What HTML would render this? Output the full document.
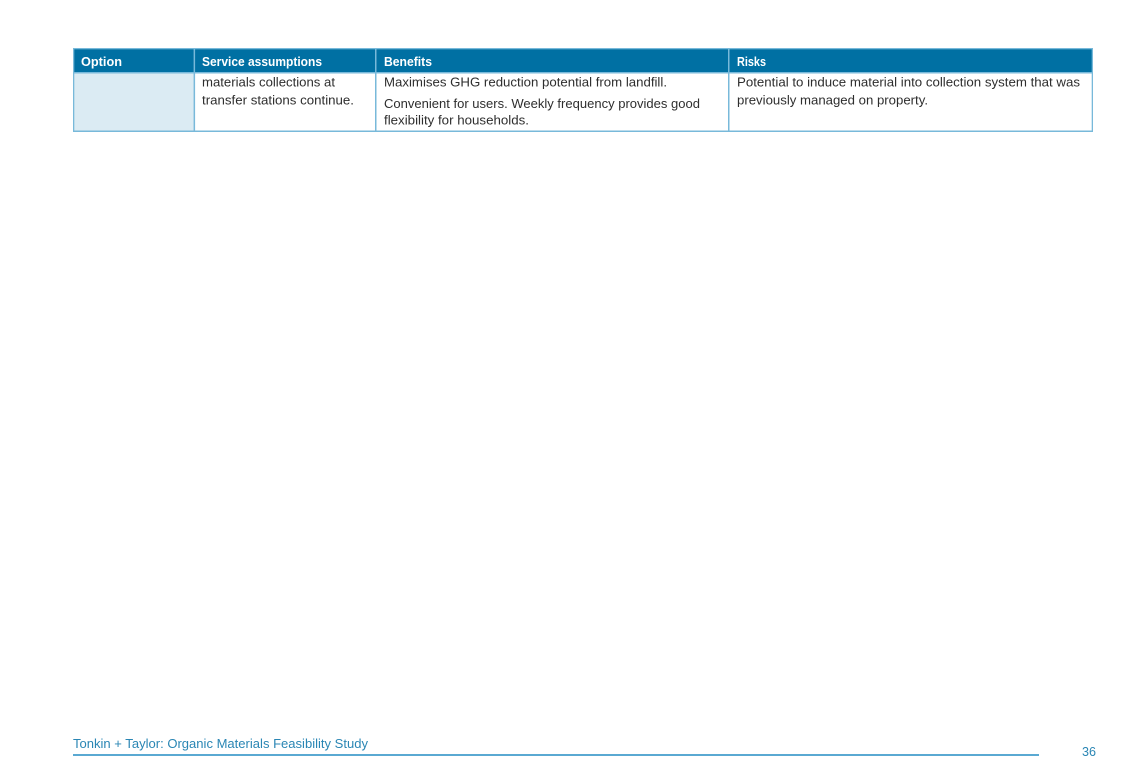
<!DOCTYPE html>
<html lang="en">
<head>
<meta charset="utf-8">
<title>Tonkin + Taylor: Organic Materials Feasibility Study</title>
<style>
html,body{margin:0;padding:0;background:#fff;width:1133px;height:783px;overflow:hidden}
svg{display:block}
text{font-family:"Liberation Sans",Arial,sans-serif;font-size:13px;fill:#2e2e2e}
.h{font-weight:bold;fill:#fff}
.f{fill:#2a86b4}
</style>
</head>
<body>
<svg width="1133" height="783" viewBox="0 0 1133 783" xmlns="http://www.w3.org/2000/svg">
<rect x="73" y="49" width="1019" height="24" fill="#0070a3"/>
<rect x="74" y="73" width="120" height="58" fill="#dbebf3"/>
<g fill="#78b9da">
<rect x="73" y="48" width="1020" height="1.3"/>
<rect x="73" y="72" width="1020" height="1.5"/>
<rect x="73" y="130.5" width="1020" height="1.5"/>
<rect x="73" y="48" width="1.3" height="84"/>
<rect x="193.6" y="48" width="1.5" height="84"/>
<rect x="375" y="48" width="1.5" height="84"/>
<rect x="728" y="48" width="1.5" height="84"/>
<rect x="1091.7" y="48" width="1.3" height="84"/>
</g>
<text class="h" x="81" y="66" textLength="41" lengthAdjust="spacingAndGlyphs">Option</text>
<text class="h" x="202" y="66" textLength="120" lengthAdjust="spacingAndGlyphs">Service assumptions</text>
<text class="h" x="384" y="66" textLength="48" lengthAdjust="spacingAndGlyphs">Benefits</text>
<text class="h" x="737" y="66" textLength="29" lengthAdjust="spacingAndGlyphs">Risks</text>

<text x="202" y="86.6" textLength="133" lengthAdjust="spacingAndGlyphs">materials collections at</text>
<text x="202" y="104.6" textLength="152" lengthAdjust="spacingAndGlyphs">transfer stations continue.</text>
<text x="384" y="86.6" textLength="283" lengthAdjust="spacingAndGlyphs">Maximises GHG reduction potential from landfill.</text>
<text x="384" y="108" textLength="316" lengthAdjust="spacingAndGlyphs">Convenient for users. Weekly frequency provides good</text>
<text x="384" y="124.4" textLength="145" lengthAdjust="spacingAndGlyphs">flexibility for households.</text>
<text x="737" y="86.6" textLength="343" lengthAdjust="spacingAndGlyphs">Potential to induce material into collection system that was</text>
<text x="737" y="104.6" textLength="191" lengthAdjust="spacingAndGlyphs">previously managed on property.</text>

<text class="f" x="73" y="748" textLength="295" lengthAdjust="spacingAndGlyphs">Tonkin + Taylor: Organic Materials Feasibility Study</text>
<rect x="73" y="754" width="966" height="2" fill="#5aa9d2"/>
<text class="f" x="1082" y="756" textLength="14" lengthAdjust="spacingAndGlyphs">36</text>
</svg>
</body>
</html>
